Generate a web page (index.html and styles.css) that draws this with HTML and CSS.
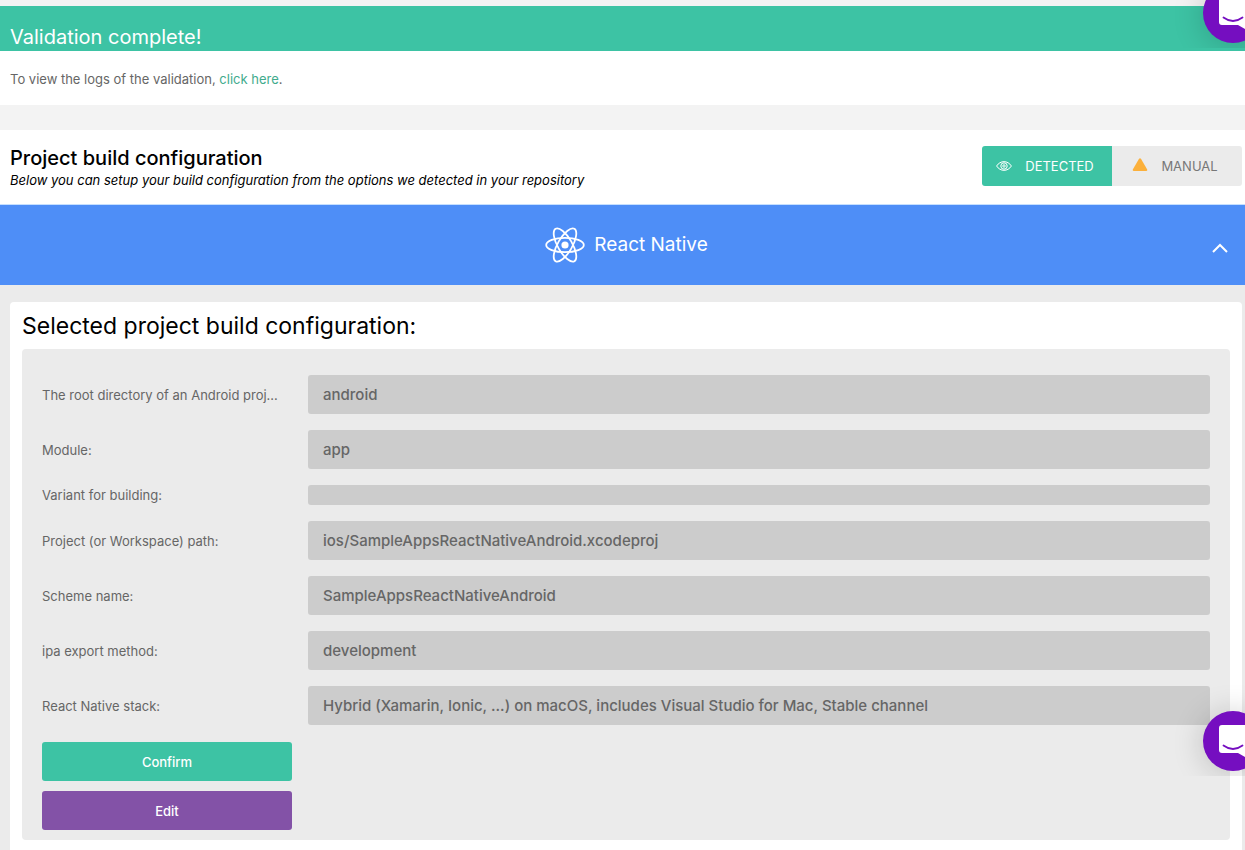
FILE: index.html
```html
<!DOCTYPE html>
<html lang="en">
<head>
<meta charset="utf-8">
<meta name="viewport" content="width=device-width, initial-scale=1">
<title>Project build configuration</title>
<link rel="stylesheet" href="styles.css">
</head>
<body>
<main class="page">
  <section class="validation">
    <h2 class="validation-title">Validation complete!</h2>
    <p class="validation-text">To view the logs of the validation, <a class="link" href="#logs">click here</a>.</p>
  </section>

  <section class="config">
    <header class="config-header">
      <div class="config-heading">
        <h1 class="config-title">Project build configuration</h1>
        <p class="config-subtitle">Below you can setup your build configuration from the options we detected in your repository</p>
      </div>
      <div class="mode" role="group" aria-label="Configuration mode">
        <button class="mode-button mode-active" type="button" aria-pressed="true">
          <svg class="mode-icon" viewBox="0 0 16 16" fill="none" stroke="currentColor" aria-hidden="true">
            <path d="M.6 8C4.2 2.2 11.8 2.2 15.4 8 11.8 13.8 4.2 13.8.6 8z"/>
            <circle cx="8" cy="8" r="3.2"/>
            <circle cx="8" cy="8" r="1.2"/>
          </svg>
          DETECTED
        </button>
        <button class="mode-button" type="button" aria-pressed="false">
          <svg class="mode-icon" viewBox="0 0 16 16" aria-hidden="true">
            <path fill="#fbb03b" d="M6.900 1.100q1.100-1.500 2.200 0l6.100 10.400q.4 1.500-1 1.500H1.800q-1.400 0-1-1.500z"/>
          </svg>
          MANUAL
        </button>
      </div>
    </header>

    <button class="platform" type="button" aria-expanded="true">
      <svg class="platform-logo" viewBox="0 0 40 40" fill="none" stroke="currentColor" stroke-width="1.8" aria-hidden="true">
        <circle cx="20" cy="20" r="3.6" fill="currentColor" stroke="none"/>
        <ellipse cx="20" cy="20" rx="18.8" ry="7.2"/>
        <ellipse cx="20" cy="20" rx="18.8" ry="7.2" transform="rotate(60 20 20)"/>
        <ellipse cx="20" cy="20" rx="18.8" ry="7.2" transform="rotate(120 20 20)"/>
      </svg>
      <span>React Native</span>
      <svg class="platform-chevron" viewBox="0 0 16 10" fill="none" stroke="currentColor" stroke-width="2" aria-hidden="true">
        <path d="M1 9l7-7 7 7"/>
      </svg>
    </button>

    <div class="panel">
      <div class="card">
        <h2 class="card-title">Selected project build configuration:</h2>
        <div class="settings">
          <dl class="fields">
            <dt class="field-name">The root directory of an Android project:</dt>
            <dd class="field-value">android</dd>
            <dt class="field-name">Module:</dt>
            <dd class="field-value">app</dd>
            <dt class="field-name">Variant for building:</dt>
            <dd class="field-value field-empty"></dd>
            <dt class="field-name">Project (or Workspace) path:</dt>
            <dd class="field-value">ios/SampleAppsReactNativeAndroid.xcodeproj</dd>
            <dt class="field-name">Scheme name:</dt>
            <dd class="field-value">SampleAppsReactNativeAndroid</dd>
            <dt class="field-name">ipa export method:</dt>
            <dd class="field-value">development</dd>
            <dt class="field-name">React Native stack:</dt>
            <dd class="field-value">Hybrid (Xamarin, Ionic, ...) on macOS, includes Visual Studio for Mac, Stable channel</dd>
          </dl>
          <div class="actions">
            <button class="action action-confirm" type="button">Confirm</button>
            <button class="action action-edit" type="button">Edit</button>
          </div>
        </div>
      </div>
    </div>
  </section>

  <div class="chat chat-top">
    <button class="chat-button" type="button" aria-label="Open chat">
      <svg class="chat-icon" viewBox="0 0 60 60" aria-hidden="true">
        <path fill="#fff" d="M19 14h22q3 0 3 3v30l-9-5H19q-3 0-3-3V17q0-3 3-3z"/>
        <path fill="none" stroke="#750ec0" stroke-width="1.8" stroke-linecap="round" d="M20.500 34.500q9.500 7 19 0"/>
      </svg>
    </button>
  </div>
  <div class="chat chat-bottom">
    <button class="chat-button" type="button" aria-label="Open chat">
      <svg class="chat-icon" viewBox="0 0 60 60" aria-hidden="true">
        <path fill="#fff" d="M19 14h22q3 0 3 3v30l-9-5H19q-3 0-3-3V17q0-3 3-3z"/>
        <path fill="none" stroke="#750ec0" stroke-width="1.8" stroke-linecap="round" d="M20.500 34.500q9.500 7 19 0"/>
      </svg>
    </button>
  </div>
</main>
</body>
</html>
```
FILE: styles.css
```css
* {
  box-sizing: border-box;
}

body {
  margin: 0;
  background: #ebebeb;
  color: #666;
  font: 13px/20px Inter, "Liberation Sans", sans-serif;
}

h1, h2, p, dl, dd {
  margin: 0;
}

button {
  border: 0;
  padding: 0;
  font: inherit;
  cursor: pointer;
}

.page {
  position: relative;
  min-height: 100vh;
  overflow: hidden;
}

.validation {
  border-top: 6px solid #f3f3f3;
  border-bottom: 25px solid #f3f3f3;
  background: #fff;
}

.validation-title {
  padding: 19px 10px 2px;
  background: #3dc3a4;
  color: #fff;
  font-size: 20px;
  font-weight: 400;
  line-height: 24px;
}

.validation-text {
  padding: 18px 10px 16px;
}

.link {
  color: #42ab8d;
  text-decoration: none;
}

.config-header {
  display: flex;
  align-items: flex-start;
  justify-content: space-between;
  padding: 16px 3px 14px 10px;
  border-bottom: 1px solid #c5dfff;
  background: #fff;
  color: #000;
}

.config-title {
  font-size: 20px;
  font-weight: 500;
  line-height: 24px;
}

.config-subtitle {
  font-style: italic;
}

.mode {
  display: flex;
  overflow: hidden;
  border-radius: 3px;
}

.mode-button {
  display: flex;
  align-items: center;
  justify-content: center;
  gap: 13px;
  width: 130px;
  height: 40px;
  padding-right: 4px;
  background: #ebebeb;
  color: #777;
}

.mode-active {
  background: #3dc3a4;
  color: #fff;
}

.mode-icon {
  width: 16px;
  height: 16px;
}

.platform {
  position: relative;
  display: flex;
  align-items: center;
  justify-content: center;
  gap: 9px;
  width: 100%;
  height: 80px;
  padding-left: 8px;
  background: #4e8ef7;
  color: #fff;
  font-size: 19px;
}

.platform-logo {
  width: 40px;
  height: 40px;
}

.platform-chevron {
  position: absolute;
  right: 17px;
  top: 38px;
  width: 16px;
  height: 10px;
}

.panel {
  padding: 17px 3px 0 10px;
}

.card {
  padding: 10px 12px 20px;
  border-radius: 4px;
  background: #fff;
}

.card-title {
  color: #000;
  font-size: 23px;
  font-weight: 400;
  line-height: 28px;
}

.settings {
  margin-top: 9px;
  padding: 26px 20px 10px;
  border-radius: 4px;
  background: #ebebeb;
}

.fields {
  display: grid;
  grid-template-columns: 250px 1fr;
  gap: 16px;
  align-items: center;
}

.field-name {
  overflow: hidden;
  padding-right: 12px;
  text-overflow: ellipsis;
  white-space: nowrap;
}

.field-value {
  padding: 10px 15px;
  border-radius: 3px;
  background: #ccc;
  font-size: 15px;
  font-weight: 500;
  line-height: 19px;
}

.actions {
  display: grid;
  gap: 10px;
  width: 250px;
  margin-top: 17px;
}

.action {
  height: 39px;
  border-radius: 3px;
  color: #fff;
  font-weight: 500;
}

.action-confirm {
  background: #3dc3a4;
}

.action-edit {
  background: #8352a7;
}

.chat {
  position: absolute;
  right: 0;
  width: 80px;
  height: 120px;
  overflow: hidden;
  pointer-events: none;
}

.chat-top {
  top: -72px;
}

.chat-bottom {
  top: 656px;
}

.chat-button {
  position: absolute;
  right: -18px;
  bottom: 5px;
  width: 60px;
  height: 60px;
  border-radius: 50%;
  background: #750ec0;
  box-shadow: 0 2px 32px rgba(0, 0, 0, 0.2);
  pointer-events: auto;
}

.chat-icon {
  display: block;
  width: 60px;
  height: 60px;
}
```
